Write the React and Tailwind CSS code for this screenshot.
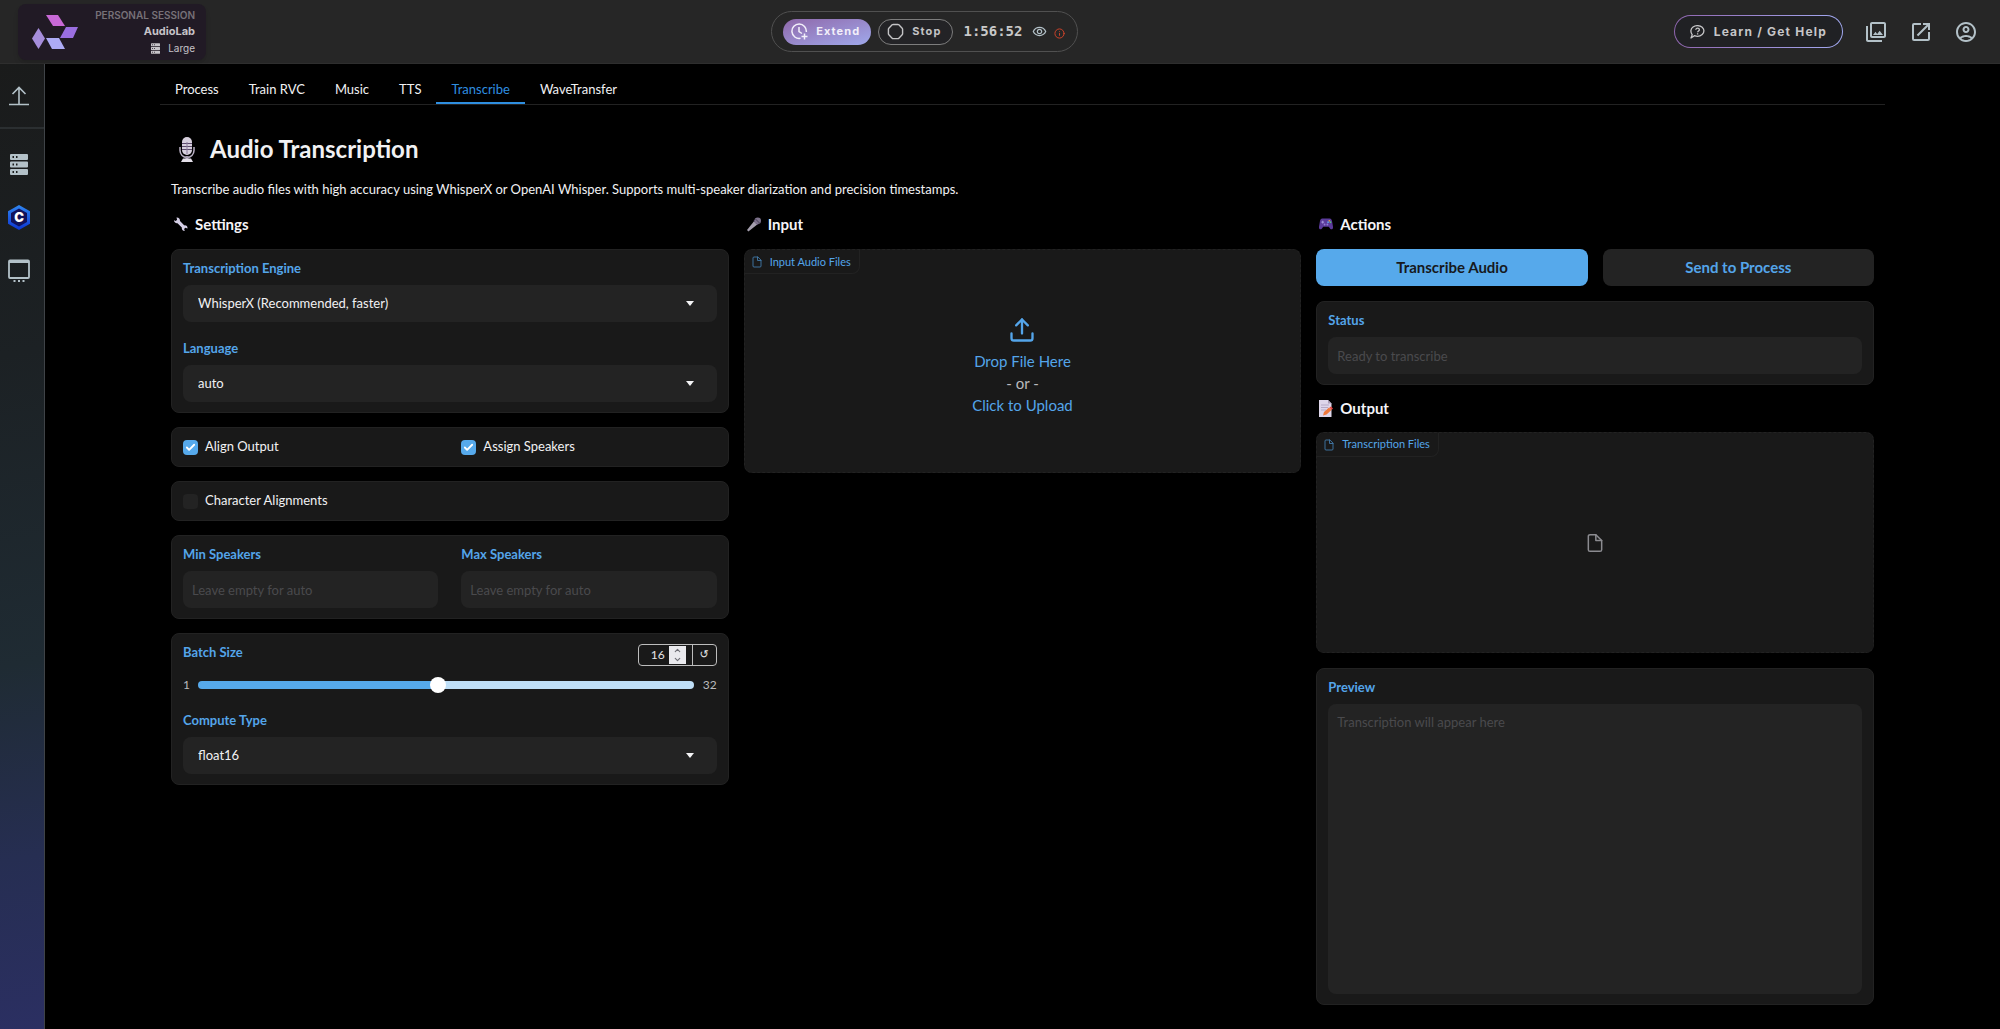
import { useState } from "react";
import { Check, ChevronDown, ChevronUp, Info, Octagon, Upload } from "lucide-react";
import { MdOpenInNew, MdOutlineAccountCircle, MdOutlinePhotoLibrary, MdOutlineRemoveRedEye } from "react-icons/md";

const tabs = ["Process", "Train RVC", "Music", "TTS", "Transcribe", "WaveTransfer"];

/* ---------- icons ---------- */

function Logo() {
    return (
        <svg width="46" height="34" viewBox="0 0 46 34">
            <path d="M14 0h12l7 11H21z" fill="#c869d6" />
            <path d="M34 12h12l-5 11H28z" fill="#9a6ee0" />
            <path d="M14 23h13l6 11H20z" fill="#adabf5" />
            <path d="M6.500 13l6.500 10.500L6.500 34 0 23.500z" fill="#a68ddb" />
        </svg>
    );
}

function ServerIcon({ className }) {
    return (
        <svg className={className} viewBox="0 0 18 21" fill="currentColor">
            <path fillRule="evenodd" d="M1 0h16a1 1 0 0 1 1 1v4a1 1 0 0 1-1 1H1a1 1 0 0 1-1-1V1a1 1 0 0 1 1-1zM2.500 2v2h1.500V2zM6 2v2h1.500V2z" />
            <path fillRule="evenodd" d="M1 7.500h16a1 1 0 0 1 1 1v4a1 1 0 0 1-1 1H1a1 1 0 0 1-1-1v-4a1 1 0 0 1 1-1zM2.500 9.500v2h1.500v-2zM6 9.500v2h1.500v-2z" />
            <path fillRule="evenodd" d="M1 15h16a1 1 0 0 1 1 1v4a1 1 0 0 1-1 1H1a1 1 0 0 1-1-1v-4a1 1 0 0 1 1-1zM2.500 17v2h1.500v-2zM6 17v2h1.500v-2z" />
        </svg>
    );
}

function UploadArrowIcon() {
    return (
        <svg width="20" height="20" viewBox="0 0 20 20" fill="none" stroke="currentColor" strokeWidth="1.600">
            <path d="M10 18V1.500M3.500 8L10 1.500 16.500 8M0 18.500h20" />
        </svg>
    );
}

function CivitHexIcon() {
    return (
        <svg width="22" height="25" viewBox="0 0 22 25">
            <defs>
                <linearGradient id="hex" x1="0" y1="0" x2="0" y2="1">
                    <stop offset="0" stopColor="#2f86f0" />
                    <stop offset="1" stopColor="#0d35d2" />
                </linearGradient>
            </defs>
            <path d="M11 0l11 6.250v12.500L11 25 0 18.750V6.250z" fill="url(#hex)" />
            <path d="M11 3.500l8 4.500v9l-8 4.500L3 17V8z" fill="#11125c" />
            <text x="11" y="17" textAnchor="middle" fontFamily="Inter, sans-serif" fontSize="13" fontWeight="900" fill="#fff">C</text>
        </svg>
    );
}

function MonitorIcon() {
    return (
        <svg width="22" height="24" viewBox="0 0 22 24" fill="none" stroke="currentColor">
            <rect x="1" y="1.500" width="20" height="17.500" rx="1" strokeWidth="1.800" />
            <path d="M1 2.500h20" strokeWidth="3" />
            <path d="M5.500 22h2M10 22h2M14.500 22h2" strokeWidth="2" />
        </svg>
    );
}

function ClockPlusIcon() {
    return (
        <svg width="17" height="17" viewBox="0 0 17 17" fill="none" stroke="currentColor" strokeWidth="1.500">
            <path d="M9.500 15.300A7.200 7.200 0 1 1 15.300 9" />
            <path d="M8 4v4.500l3 2M13.500 10.500v6M10.500 13.500h6" />
        </svg>
    );
}

function HelpBubbleIcon() {
    return (
        <svg width="15" height="14" viewBox="0 0 15 14" fill="none" stroke="currentColor" strokeWidth="1.300">
            <path d="M2.200 9.700C.2 7 .5 3.800 3 2c2.600-1.900 6.800-1.800 9.200.2 2.300 2 2.300 5.300 0 7.300-2.100 1.900-5.300 2.300-7.800 1.200L1 13z" strokeLinejoin="round" />
            <path d="M5.800 4.800c0-1 .8-1.600 1.800-1.600s1.800.6 1.800 1.500c0 1.300-1.800 1.300-1.800 2.600M7.600 8.300v1.200" />
        </svg>
    );
}

function FileIcon({ className }) {
    return (
        <svg className={className} viewBox="0 0 24 24" fill="none" stroke="currentColor" strokeWidth="1.800" strokeLinecap="round" strokeLinejoin="round">
            <path d="M13 2H6a2 2 0 0 0-2 2v16a2 2 0 0 0 2 2h12a2 2 0 0 0 2-2V9z" />
            <path d="M13 2v7h7" />
        </svg>
    );
}

function StudioMicEmoji() {
    return (
        <svg width="16" height="25" viewBox="0 0 16 25">
            <path d="M1 10v3.500a7 7 0 0 0 14 0V10" fill="none" stroke="#b9b0c4" strokeWidth="1.500" />
            <rect x="3" y="0" width="10" height="18" rx="5" fill="#d6cfdd" />
            <path d="M3 6.500h10M3 9.500h10M3 12.500h10" stroke="#5b4a6b" />
            <path d="M8 5v12" stroke="#8b7c9b" />
            <path d="M6.500 19h3v3h-3z" fill="#a399ae" />
            <path d="M4 21.500h8l2 3.500H2z" fill="#e4dfe9" />
        </svg>
    );
}

function WrenchEmoji() {
    return (
        <svg width="14" height="14" viewBox="0 0 14 14">
            <path d="M2.500 0.500l.6 2.300-1.300 1.300L0 3.300c0 1.800 1.500 3.200 3.500 2.900l4.300 4.300c-.3 1.700 1 3.500 3 3.500l-.7-2 1.200-1.200 2.200.6c.2-1.900-1.300-3.300-3.100-3L6 4C6.300 2 4.500.2 2.500.5z" fill="#d5cfe6" />
        </svg>
    );
}

function MicEmoji() {
    return (
        <svg width="15" height="15" viewBox="0 0 15 15">
            <path d="M7.500 4l3.500 3.500L1.500 15 0 13.500z" fill="#a59fae" />
            <path d="M7 3.800L11.200 8l1.200-1L8 2.600z" fill="#5e4b78" />
            <circle cx="11.500" cy="3.500" r="3.500" fill="#7e738c" />
            <path d="M9 1.500l4.500 4.500" stroke="#433b52" />
        </svg>
    );
}

function GamepadEmoji() {
    return (
        <svg width="15" height="12" viewBox="0 0 15 12">
            <path d="M3.500 0h8c1.500 0 2 1 2.400 2.500L15 9c.3 2.500-1.700 3.500-3 2L10.500 9h-6L3 11c-1.300 1.500-3.300.5-3-2l1.100-6.500C1.500 1 2 0 3.500 0z" fill="#5b3b9b" />
            <path d="M2.500 4h3M4 2.500v3" stroke="#a99be0" />
            <circle cx="11" cy="2.500" r=".9" fill="#f0a03c" />
            <circle cx="12.300" cy="4" r=".9" fill="#58c47a" />
            <circle cx="9.700" cy="4" r=".9" fill="#5aa7f0" />
            <circle cx="6" cy="6.500" r="1" fill="#8f7bd2" />
            <circle cx="9" cy="6.500" r="1" fill="#8f7bd2" />
        </svg>
    );
}

function MemoEmoji() {
    return (
        <svg width="14" height="17" viewBox="0 0 14 17">
            <path d="M0 0h9l3.500 3.500V17H0z" fill="#ded6ea" />
            <path d="M9 0l3.500 3.500H9z" fill="#a99db8" />
            <path d="M2 5h8M2 7.500h7M2 10h5" stroke="#b5a9c6" />
            <path d="M4 15.500l1-3.500 5-4.500 2.500 2.500-5 4.500z" fill="#f0793c" />
            <path d="M10.500 7.500l1.500-1 2 2-1.500 1.500z" fill="#e2443f" />
        </svg>
    );
}

/* ---------- form parts ---------- */

function Panel({ className = "", children }) {
    return <div className={`rounded-lg border border-[#222222] bg-[#191919] px-[11px] py-[10px] ${className}`}>{children}</div>;
}

function SectionHeading({ icon, children }) {
    return (
        <h2 className="flex items-center gap-[7px] pl-[3px] text-[15px] leading-5 font-bold text-[#f5f5f8]">
            <span className="flex w-[14px] justify-center">{icon}</span>
            {children}
        </h2>
    );
}

function FieldLabel({ htmlFor, children }) {
    return <label htmlFor={htmlFor} className="block text-[13px] leading-4 font-bold text-[#54a5ea]">{children}</label>;
}

function SelectField({ id, label, options }) {
    return (
        <div className="flex flex-col gap-[9px]">
            <FieldLabel htmlFor={id}>{label}</FieldLabel>
            <div className="relative">
                <select id={id} className="h-[37px] w-full appearance-none rounded-lg bg-[#232323] px-[15px] text-[13px] text-[#f1f1f3]">
                    {options.map((o) => <option key={o}>{o}</option>)}
                </select>
                <svg className="pointer-events-none absolute inset-y-0 right-[23px] my-auto" width="8" height="5" viewBox="0 0 8 5">
                    <path d="M0 0h8L4 5z" fill="#f4f4f6" />
                </svg>
            </div>
        </div>
    );
}

function TextField({ id, label, placeholder }) {
    return (
        <div className="flex flex-col gap-[9px]">
            <FieldLabel htmlFor={id}>{label}</FieldLabel>
            <input id={id} type="text" placeholder={placeholder} className="h-[37px] w-full rounded-lg bg-[#232323] px-[9px] text-[13px] text-white placeholder:text-[#4a4a4d]" />
        </div>
    );
}

function CheckField({ label, defaultChecked = false }) {
    return (
        <label className="flex h-[18px] items-center gap-[7px] text-[13px] text-[#f1f1f3]">
            <span className="grid place-items-center">
                <input type="checkbox" defaultChecked={defaultChecked} className="peer col-start-1 row-start-1 size-[15px] appearance-none rounded-sm bg-[#232323] checked:bg-[#56a9eb]" />
                <Check className="pointer-events-none invisible col-start-1 row-start-1 text-white peer-checked:visible" size={11} strokeWidth={4} />
            </span>
            {label}
        </label>
    );
}

function BlockTag({ children }) {
    return (
        <span className="absolute top-0 left-0 flex h-6 items-center gap-[7px] rounded-br-lg border-r border-b border-[#222222] pr-2 pl-[6px] text-[11px] text-[#54a5ea]">
            <FileIcon className="size-3 opacity-70" />
            {children}
        </span>
    );
}

/* ---------- page parts ---------- */

function Header() {
    return (
        <header className="flex h-16 items-center justify-between border-b border-[#2e2e2e] bg-[#262626] pr-[22px] pl-[18px] font-['Inter',sans-serif]">
            <div className="flex h-14 w-[188px] items-center justify-between rounded-lg bg-[#211a25] pr-[11px] pl-[14px] shadow-md">
                <Logo />
                <div className="flex flex-col items-end text-[#c6c3c8]">
                    <span className="text-[10px] leading-4 font-semibold text-[#777178]">PERSONAL SESSION</span>
                    <span className="text-[11px] leading-[17px] font-bold">AudioLab</span>
                    <span className="flex items-center gap-2 text-[10px] leading-4"><ServerIcon className="h-[11px] w-[9px]" />Large</span>
                </div>
            </div>

            <div className="mr-[30px] flex h-[41px] items-center gap-[7px] rounded-full border border-[#505050] pr-[12px] pl-[11px]">
                <button className="flex h-[26px] items-center gap-2 rounded-full bg-linear-to-br from-[#8e68aa] to-[#9fa9ec] pr-[11px] pl-2 text-[11px] font-bold tracking-widest text-[#f2effa]">
                    <ClockPlusIcon />Extend
                </button>
                <button className="flex h-[26px] items-center gap-2 rounded-full border border-[#7d7d7d] bg-[#232326] pr-[11px] pl-2 text-[11px] font-bold tracking-widest text-[#c4c4c6]">
                    <Octagon size={17} strokeWidth={2} />Stop
                </button>
                <span className="ml-[3px] font-['DejaVu_Sans_Mono',monospace] text-[14px] font-bold text-[#c8c8c8]">1:56:52</span>
                <MdOutlineRemoveRedEye className="ml-[3px] text-[#b3c1c8]" size={15} />
                <Info className="mt-[3px] text-[#d8452b]" size={11} />
            </div>

            <div className="flex items-center gap-[21px] text-[#b3c1c8]">
                <div className="rounded-full bg-linear-to-r from-[#9066b0] to-[#a3abf3] p-px">
                    <button className="flex h-[31px] items-center gap-[9px] rounded-full bg-[#202124] px-[15px] text-[12px] font-bold tracking-widest text-[#c6c6c8]">
                        <HelpBubbleIcon />Learn / Get Help
                    </button>
                </div>
                <button aria-label="Gallery"><MdOutlinePhotoLibrary size={24} /></button>
                <button aria-label="Open in new window"><MdOpenInNew size={24} /></button>
                <button aria-label="Account"><MdOutlineAccountCircle size={24} /></button>
            </div>
        </header>
    );
}

function Sidebar() {
    return (
        <aside className="w-[45px] shrink-0 border-r border-[#3f4347] bg-linear-[170deg,#1a1b1b_0%,#1c2124_30%,#1f2b33_62%,#262e52_82%,#2b2f62_100%] text-[#b3c1c8]">
            <div className="flex h-[65px] items-center border-b-2 border-[#2b2f31] pl-[9px]">
                <button aria-label="Upload"><UploadArrowIcon /></button>
            </div>
            <nav className="flex flex-col items-center pr-[6px]">
                <button aria-label="Servers" className="mt-[25px]"><ServerIcon className="h-[21px] w-[18px]" /></button>
                <button aria-label="Models" className="mt-[30px]"><CivitHexIcon /></button>
                <button aria-label="Screens" className="mt-[29px]"><MonitorIcon /></button>
            </nav>
        </aside>
    );
}

function SettingsColumn() {
    const [batch, setBatch] = useState(16);
    const percent = ((batch - 1) / 31) * 100;

    return (
        <section>
            <SectionHeading icon={<WrenchEmoji />}>Settings</SectionHeading>
            <div className="mt-[15px] flex flex-col gap-[14px]">
                <Panel className="flex flex-col gap-[18px]">
                    <SelectField id="engine" label="Transcription Engine" options={["WhisperX (Recommended, faster)", "OpenAI Whisper"]} />
                    <SelectField id="language" label="Language" options={["auto", "en"]} />
                </Panel>
                <Panel className="grid grid-cols-2 gap-[23px]">
                    <CheckField label="Align Output" defaultChecked />
                    <CheckField label="Assign Speakers" defaultChecked />
                </Panel>
                <Panel>
                    <CheckField label="Character Alignments" />
                </Panel>
                <Panel className="grid grid-cols-2 gap-[23px]">
                    <TextField id="min" label="Min Speakers" placeholder="Leave empty for auto" />
                    <TextField id="max" label="Max Speakers" placeholder="Leave empty for auto" />
                </Panel>
                <Panel>
                    <div className="flex h-[22px] items-start justify-between">
                        <FieldLabel htmlFor="batch">Batch Size</FieldLabel>
                        <div className="flex h-[22px] overflow-hidden rounded-sm border border-[#bdbdbd] text-[12px] text-[#e6e6e8]">
                            <div className="flex items-center gap-1 pr-[6px] pl-[10px]">
                                <input aria-label="Batch size value" type="number" min="1" max="32" value={batch} onChange={(e) => setBatch(Number(e.target.value))} className="w-4 text-right [appearance:textfield] [&::-webkit-inner-spin-button]:appearance-none" />
                                <span className="flex w-[17px] flex-col items-center bg-[#e9e9ed] text-[#6f6f76]">
                                    <button aria-label="Increase" onClick={() => setBatch(Math.min(32, batch + 1))}><ChevronUp size={9} strokeWidth={3} /></button>
                                    <button aria-label="Decrease" onClick={() => setBatch(Math.max(1, batch - 1))}><ChevronDown size={9} strokeWidth={3} /></button>
                                </span>
                            </div>
                            <button aria-label="Reset" onClick={() => setBatch(16)} className="w-6 border-l border-[#bdbdbd] font-['DejaVu_Sans',sans-serif] text-[11px]">↺</button>
                        </div>
                    </div>
                    <div className="mt-[11px] flex h-4 items-center gap-2 text-[12px] text-[#b9b9bd]">
                        <span className="w-[7px]">1</span>
                        <input
                            id="batch" type="range" min="1" max="32" value={batch} onChange={(e) => setBatch(Number(e.target.value))}
                            style={{ backgroundImage: `linear-gradient(to right, #56a9eb ${percent}%, #bfdff7 ${percent}%)` }}
                            className="h-2 min-w-0 flex-1 appearance-none rounded-full [&::-webkit-slider-thumb]:size-4 [&::-webkit-slider-thumb]:appearance-none [&::-webkit-slider-thumb]:rounded-full [&::-webkit-slider-thumb]:bg-white"
                        />
                        <span className="w-[15px] text-right">32</span>
                    </div>
                    <div className="mt-[19px]">
                        <SelectField id="compute" label="Compute Type" options={["float16", "float32", "int8"]} />
                    </div>
                </Panel>
            </div>
        </section>
    );
}

function InputColumn() {
    return (
        <section>
            <SectionHeading icon={<MicEmoji />}>Input</SectionHeading>
            <label className="relative mt-[15px] flex h-56 cursor-pointer flex-col items-center justify-center rounded-lg border border-dashed border-[#222222] bg-[#191919] pt-[10px] text-[15px] leading-[22px] text-[#54a5ea]">
                <BlockTag>Input Audio Files</BlockTag>
                <input type="file" className="sr-only" />
                <Upload className="mb-[6px]" size={28} strokeWidth={2} />
                <span>Drop File Here</span>
                <span className="text-[#b9b9bd]">- or -</span>
                <span>Click to Upload</span>
            </label>
        </section>
    );
}

function ActionsColumn() {
    return (
        <section>
            <SectionHeading icon={<GamepadEmoji />}>Actions</SectionHeading>
            <div className="mt-[15px] grid grid-cols-2 gap-[15px] text-[15px] font-bold">
                <button className="h-[37px] rounded-lg bg-[#56a9eb] text-[#16191d]">Transcribe Audio</button>
                <button className="h-[37px] rounded-lg bg-[#232323] text-[#54a5ea]">Send to Process</button>
            </div>
            <Panel className="mt-[15px] mb-[13px]">
                <TextField id="status" label="Status" placeholder="Ready to transcribe" />
            </Panel>
            <SectionHeading icon={<MemoEmoji />}>Output</SectionHeading>
            <div className="relative mt-[14px] flex h-[221px] items-center justify-center rounded-lg border border-dashed border-[#222222] bg-[#191919]">
                <BlockTag>Transcription Files</BlockTag>
                <FileIcon className="size-5 text-[#8b8b90]" />
            </div>
            <Panel className="mt-[15px] flex flex-col gap-[9px]">
                <FieldLabel htmlFor="preview">Preview</FieldLabel>
                <textarea id="preview" placeholder="Transcription will appear here" className="h-[290px] w-full resize-none rounded-lg bg-[#232323] px-[9px] py-2 text-[13px] leading-5 text-white placeholder:text-[#4a4a4d]" />
            </Panel>
        </section>
    );
}

export default function App() {
    const [active, setActive] = useState("Transcribe");

    return (
        <div className="flex min-h-screen flex-col bg-black font-['Lato',sans-serif] text-[13px] text-[#f1f1f3]">
            <Header />
            <div className="flex flex-1">
                <Sidebar />
                <main className="flex-1 px-4 pt-2 pb-5">
                    <div className="mx-auto max-w-[1725px]">
                        <div role="tablist" className="flex border-b border-[#222222]">
                            {tabs.map((tab) => (
                                <button
                                    key={tab} role="tab" aria-selected={tab === active} onClick={() => setActive(tab)}
                                    className={tab === active ? "h-8 border-b-2 border-[#2f8fe0] px-[15px] pt-[6px] text-[#2f8fe0]" : "h-8 border-b-2 border-transparent px-[15px] pt-[6px]"}
                                >
                                    {tab}
                                </button>
                            ))}
                        </div>

                        <div className="px-[11px]">
                            <h1 className="mt-7 flex h-8 items-center gap-[15px] pl-2 text-[24px] font-bold"><StudioMicEmoji />Audio Transcription</h1>
                            <p className="mt-[14px] leading-5">Transcribe audio files with high accuracy using WhisperX or OpenAI Whisper. Supports multi-speaker diarization and precision timestamps.</p>
                            <div className="mt-[15px] grid grid-cols-3 gap-[15px]">
                                <SettingsColumn />
                                <InputColumn />
                                <ActionsColumn />
                            </div>
                        </div>
                    </div>
                </main>
            </div>
        </div>
    );
}
